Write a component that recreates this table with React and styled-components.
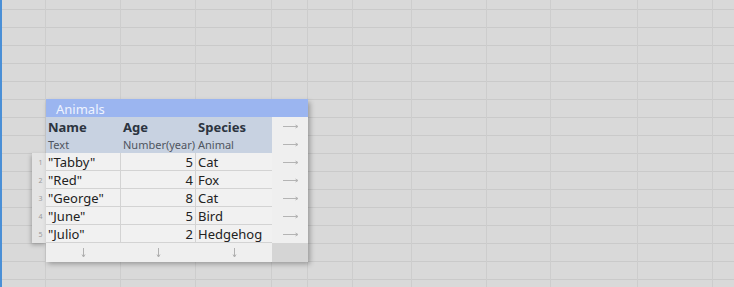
import React from "react";
import styled, { createGlobalStyle } from "styled-components";

const GlobalStyle = createGlobalStyle`
  html, body { margin: 0; padding: 0; }
  body {
    width: 734px;
    height: 287px;
    overflow: hidden;
    font-family: "Noto Sans", "Open Sans", sans-serif;
    background: #d9d9d9;
  }
`;

const Sheet = styled.div`
  display: grid;
  width: 734px;
  height: 287px;
  border-left: 2px solid #4a8fd6;
  box-sizing: border-box;
  background-color: #d9d9d9;
  background-image: linear-gradient(to bottom, #cacaca 1px, transparent 1px);
  background-size: 100% 18px;
  background-position: 0 9px;
  overflow: hidden;
`;

const GridLayer = styled.div`
  grid-area: 1 / 1;
  display: flex;
  height: 100%;
`;

const GridColumn = styled.div`
  flex: 0 0 ${(p) => p.$w}px;
  border-right: 1px solid #cdcdcd;
  box-sizing: border-box;
`;

const Canvas = styled.div`
  grid-area: 1 / 1;
  padding: 99px 0 0 30px;
  display: flex;
  align-items: flex-start;
`;

const RowNumbers = styled.div`
  margin-top: 54px;
  width: 14px;
  background: #e4e4e4;
  box-shadow: -1px 2px 4px rgba(0, 0, 0, 0.25);
  display: flex;
  flex-direction: column;
`;

const RowNumber = styled.div`
  height: 18px;
  font-size: 7px;
  color: #9a9a9a;
  display: flex;
  align-items: center;
  justify-content: center;
  padding: 1px 0 0 3px;
  box-sizing: border-box;
`;

const Table = styled.div`
  width: 262px;
  display: grid;
  grid-template-columns: 75px 75px 76px 36px;
  grid-auto-rows: 18px;
  box-shadow: 2px 3px 5px rgba(0, 0, 0, 0.3);
  background: #efefef;
`;

const Title = styled.div`
  grid-column: 1 / -1;
  background: #9bb5f0;
  color: #eef3ff;
  font-size: 13px;
  line-height: 18px;
  padding: 1px 0 0 10px;
  box-sizing: border-box;
`;

const HeadCell = styled.div`
  background: #c8d2e1;
  color: ${(p) => (p.$type ? "#4f5560" : "#2c3440")};
  font-size: ${(p) => (p.$type ? "11px" : "13px")};
  font-weight: ${(p) => (p.$type ? 400 : 700)};
  line-height: 18px;
  padding: 1px 0 0 2px;
  box-sizing: border-box;
  white-space: nowrap;
  overflow: hidden;
`;

const DataCell = styled.div`
  background: #f1f1f1;
  color: #222;
  font-size: 13px;
  line-height: 17px;
  border-bottom: 1px solid #d3d3d3;
  border-right: ${(p) => (p.$last ? "none" : "1px solid #d3d3d3")};
  padding: 1px 2px 0;
  box-sizing: border-box;
  text-align: ${(p) => (p.$num ? "right" : "left")};
  white-space: nowrap;
  overflow: hidden;
`;

const ArrowCell = styled.div`
  background: #efefef;
  display: flex;
  align-items: center;
  justify-content: center;
  padding-left: 2px;
`;

const FootCell = styled.div`
  height: 19px;
  background: ${(p) => (p.$corner ? "#d5d5d5" : "#efefef")};
  display: flex;
  align-items: center;
  justify-content: center;
`;

const RightArrow = () => (
  <svg width="16" height="5" viewBox="0 0 16 5">
    <path d="M0 2.5H15M12.5 1L15 2.5L12.5 4" stroke="#b4b4b4" strokeWidth="1" fill="none" />
  </svg>
);

const DownArrow = () => (
  <svg width="5" height="10" viewBox="0 0 5 10">
    <path d="M2.5 0V9M1 6.5L2.5 9L4 6.5" stroke="#b0b0b0" strokeWidth="1" fill="none" />
  </svg>
);

const gridWidths = [44, 75, 75, 76, 36, 45, 59, 75, 64, 87, 75, 40];

const columns = [
  { name: "Name", type: "Text" },
  { name: "Age", type: "Number(year)" },
  { name: "Species", type: "Animal" },
];

const animals = [
  { name: '"Tabby"', age: 5, species: "Cat" },
  { name: '"Red"', age: 4, species: "Fox" },
  { name: '"George"', age: 8, species: "Cat" },
  { name: '"June"', age: 5, species: "Bird" },
  { name: '"Julio"', age: 2, species: "Hedgehog" },
];

export default function App() {
  return (
    <>
      <GlobalStyle />
      <Sheet>
        <GridLayer>
          {gridWidths.map((w, i) => (
            <GridColumn key={i} $w={w} />
          ))}
        </GridLayer>
        <Canvas>
          <RowNumbers>
            {animals.map((_, i) => (
              <RowNumber key={i}>{i + 1}</RowNumber>
            ))}
          </RowNumbers>
          <Table>
            <Title>Animals</Title>
            {columns.map((c) => (
              <HeadCell key={c.name}>{c.name}</HeadCell>
            ))}
            <ArrowCell>
              <RightArrow />
            </ArrowCell>
            {columns.map((c) => (
              <HeadCell key={c.type} $type>
                {c.type}
              </HeadCell>
            ))}
            <ArrowCell>
              <RightArrow />
            </ArrowCell>
            {animals.map((a, i) => (
              <React.Fragment key={i}>
                <DataCell>{a.name}</DataCell>
                <DataCell $num>{a.age}</DataCell>
                <DataCell $last>{a.species}</DataCell>
                <ArrowCell>
                  <RightArrow />
                </ArrowCell>
              </React.Fragment>
            ))}
            <FootCell>
              <DownArrow />
            </FootCell>
            <FootCell>
              <DownArrow />
            </FootCell>
            <FootCell>
              <DownArrow />
            </FootCell>
            <FootCell $corner />
          </Table>
        </Canvas>
      </Sheet>
    </>
  );
}
